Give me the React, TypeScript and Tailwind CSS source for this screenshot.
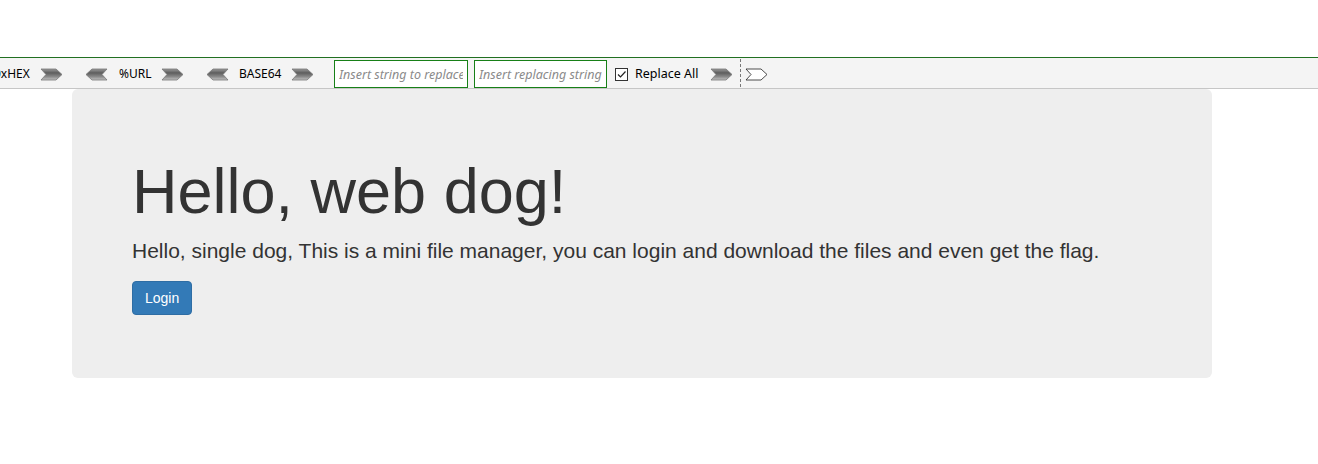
import React from "react";

function Arrow({ dir = "right", hollow = false }: { dir?: "left" | "right"; hollow?: boolean }) {
  const pts = dir === "right" ? "1,1 16,1 22,6.5 16,12 1,12 6,6.5" : "21,1 6,1 0,6.5 6,12 21,12 16,6.5";
  const id = `g-${dir}-${hollow ? "h" : "s"}`;
  return (
    <svg width="23" height="13" viewBox="0 0 23 13" className="shrink-0 block">
      <defs>
        <linearGradient id={id} x1="0" y1="0" x2="0" y2="1">
          <stop offset="0" stopColor="#9a9a9a" />
          <stop offset="0.35" stopColor="#5e5e5e" />
          <stop offset="0.7" stopColor="#8a8a8a" />
          <stop offset="1" stopColor="#c4c4c4" />
        </linearGradient>
      </defs>
      <polygon points={pts} fill={hollow ? "#ffffff" : `url(#${id})`} stroke={hollow ? "#222" : "#777"} strokeWidth="0.8" />
    </svg>
  );
}

export default function App() {
  return (
    <div className="min-h-[464px] bg-white font-['Liberation_Sans',Arial,sans-serif] text-[#333]">
      <div className="h-[57px]" />

      {/* hackbar strip */}
      <div className="h-[32px] bg-[#f4f4f4] border-t border-t-[#217021] border-b border-b-[#c6c6c6] flex items-center overflow-hidden font-['Noto_Sans',sans-serif] text-[12px] text-black">
        <span className="ml-[-6px] w-[37px] whitespace-nowrap pt-[2px]">0xHEX</span>
        <span className="ml-[9px] pt-[2px]"><Arrow /></span>
        <span className="ml-[23px] pt-[2px]"><Arrow dir="left" /></span>
        <span className="ml-[10px] w-[33px] whitespace-nowrap pt-[2px]">%URL</span>
        <span className="ml-[9px] pt-[2px]"><Arrow /></span>
        <span className="ml-[23px] pt-[2px]"><Arrow dir="left" /></span>
        <span className="ml-[9px] w-[44px] whitespace-nowrap pt-[2px]">BASE64</span>
        <span className="ml-[8px] pt-[2px]"><Arrow /></span>
        <input
          placeholder="Insert string to replace"
          className="ml-[20px] w-[134px] h-[28px] mt-[2px] border border-[#178017] bg-white px-[4px] text-[12.5px] italic placeholder:text-[#8a8a8a] outline-none"
        />
        <input
          placeholder="Insert replacing string"
          className="ml-[6px] w-[133px] h-[28px] mt-[2px] border border-[#178017] bg-white px-[4px] text-[12.5px] italic placeholder:text-[#8a8a8a] outline-none"
        />
        <span className="ml-[8px] mt-[2px] w-[13px] h-[13px] border border-[#333] bg-white flex items-center justify-center">
          <svg width="11" height="11" viewBox="0 0 11 11">
            <path d="M2 5.5 L4.5 8 L9.5 2.5" fill="none" stroke="#222" strokeWidth="1.2" />
          </svg>
        </span>
        <span className="ml-[7px] whitespace-nowrap text-[12.5px] pt-[2px]">Replace All</span>
        <span className="ml-[11px] pt-[2px]"><Arrow /></span>
        <span className="ml-[7px] h-[28px] border-l border-dashed border-[#777]" />
        <span className="ml-[4px] pt-[2px]"><Arrow hollow /></span>
      </div>

      <div className="ml-[72px] w-[1140px] bg-[#eeeeee] rounded-[6px] px-[60px] py-[48px]">
        <h1 className="mt-[20px] mb-[10px] text-[63px] leading-[1.1] font-normal">Hello, web dog!</h1>
        <p className="mb-[15px] text-[21px] leading-[30px]">
          Hello, single dog, This is a mini file manager, you can login and download the files and even get the flag.
        </p>
        <p className="mb-[15px]">
          <button className="bg-[#337ab7] border border-[#2e6da4] text-white text-[14px] leading-[20px] px-[12px] py-[6px] rounded-[4px]">
            Login
          </button>
        </p>
      </div>
    </div>
  );
}
